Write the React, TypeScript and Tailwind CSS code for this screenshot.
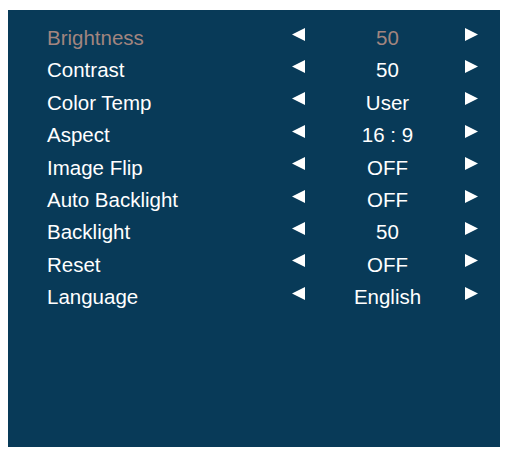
const rows: { label: string; value: string; active?: boolean }[] = [
  { label: "Brightness", value: "50", active: true },
  { label: "Contrast", value: "50" },
  { label: "Color Temp", value: "User" },
  { label: "Aspect", value: "16 : 9" },
  { label: "Image Flip", value: "OFF" },
  { label: "Auto Backlight", value: "OFF" },
  { label: "Backlight", value: "50" },
  { label: "Reset", value: "OFF" },
  { label: "Language", value: "English" },
];

function Arrow({ dir }: { dir: "left" | "right" }) {
  return (
    <svg width="14" height="13" viewBox="0 0 14 13" className="-mt-2 block">
      <polygon
        points={dir === "left" ? "0,6.5 13,0 13,13" : "0,0 13,6.5 0,13"}
        fill="#ffffff"
      />
    </svg>
  );
}

export default function App() {
  return (
    <div className="h-[454px] w-[505px] bg-white pl-2 pt-[10px] font-['Liberation_Sans',Arial,sans-serif]">
      <div className="h-[437px] w-[492px] bg-[#083a58] pl-[39px] pt-[12px]">
        <ul className="flex flex-col">
          {rows.map((r) => (
            <li
              key={r.label}
              className="grid h-[32.4px] grid-cols-[245px_14px_159px_14px] items-center text-[20.5px] leading-none"
            >
              <span className={r.active ? "text-[#a2857f]" : "text-white"}>
                {r.label}
              </span>
              <Arrow dir="left" />
              <span
                className={`pl-1 text-center ${
                  r.active ? "text-[#a2857f]" : "text-white"
                }`}
              >
                {r.value}
              </span>
              <Arrow dir="right" />
            </li>
          ))}
        </ul>
      </div>
    </div>
  );
}
